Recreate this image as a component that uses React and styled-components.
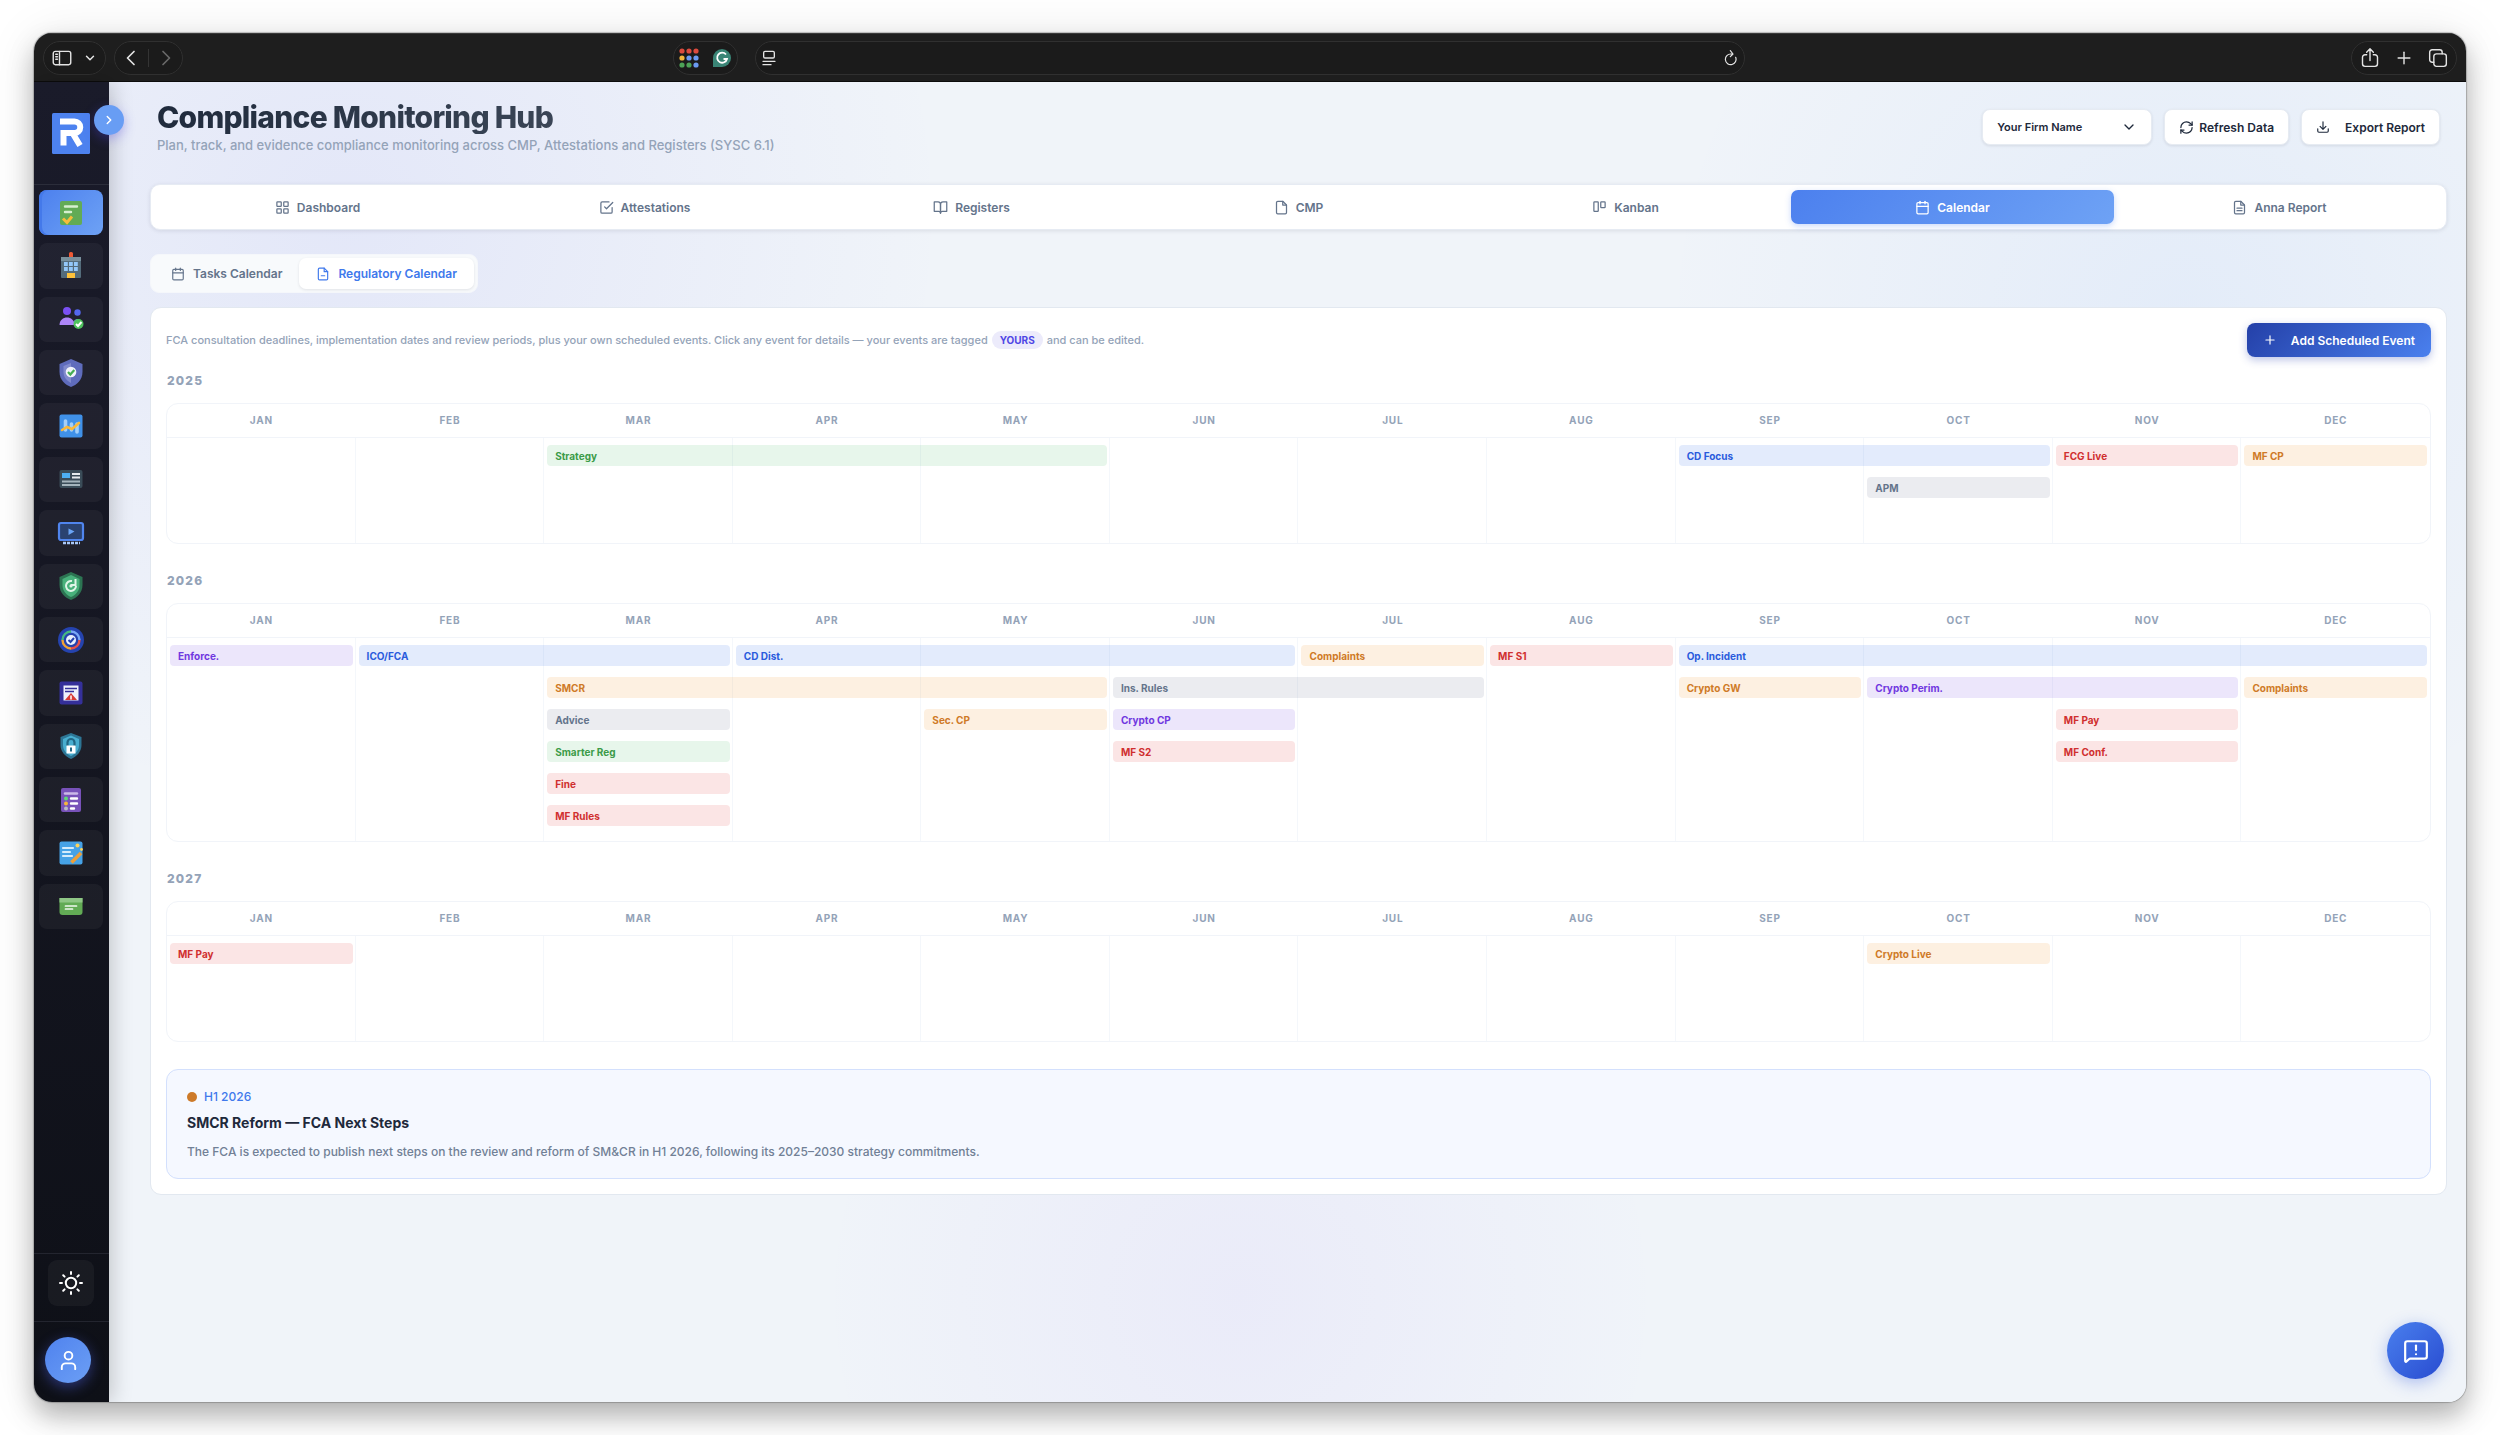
import React from "react";
import styled, { createGlobalStyle, css } from "styled-components";
import {
  Calendar,
  ChevronDown,
  ChevronRight,
  Plus,
  User,
  RefreshCw,
  MessageSquareWarning,
} from "lucide-react";

const GlobalStyle = createGlobalStyle`
  *, *::before, *::after { box-sizing: border-box; }
  body {
    margin: 0;
    background: #ffffff;
    font-family: Inter, "Liberation Sans", sans-serif;
    color: #1e293b;
  }
  button, select { font: inherit; color: inherit; }
  h1, h2, h3, p { margin: 0; }
`;

/* ---------- window frame ---------- */

const Page = styled.div`
  min-height: 100vh;
  padding: 33px 34px;
  display: flex;
`;

const Window = styled.div`
  flex: 1;
  display: flex;
  flex-direction: column;
  border-radius: 18px;
  overflow: hidden;
  background: #f0f4fa;
  box-shadow: 0 0 1px 1px rgba(0, 0, 0, 0.22), 0 14px 26px rgba(0, 0, 0, 0.26), 0 4px 50px rgba(0, 0, 0, 0.1);
`;

const BrowserBar = styled.header`
  display: grid;
  grid-template-columns: 1fr minmax(200px, 990px) 1fr;
  align-items: center;
  height: 49px;
  background: #1e1e1e;
  border-top: 1px solid #3a3a3a;
  border-bottom: 1px solid #0c0c0c;
  color: #e4e4e4;
`;

const BarSide = styled.div`
  display: flex;
  align-items: center;
  gap: 8px;
  padding: 0 9px;
  justify-content: ${(p) => (p.$end ? "flex-end" : "flex-start")};
`;

const Pill = styled.div`
  display: flex;
  align-items: center;
  justify-content: ${(p) => (p.$spread ? "space-between" : "center")};
  gap: ${(p) => p.$gap || 0}px;
  height: 34px;
  padding: 0 ${(p) => (p.$tight ? 5 : 8)}px;
  border: 1px solid #303030;
  border-radius: 17px;
  background: #1b1b1b;
`;

const PushPill = styled(Pill)`
  margin-left: auto;
  margin-right: 8px;
`;

const BarButton = styled.button`
  display: grid;
  place-items: center;
  padding: 0;
  border: 0;
  background: none;
  color: ${(p) => (p.$dim ? "#6a6a6a" : "#e4e4e4")};
`;

const PillRule = styled.span`
  width: 1px;
  height: 18px;
  background: #343434;
`;

const Body = styled.div`
  flex: 1;
  display: flex;
`;

/* ---------- sidebar ---------- */

const Sidebar = styled.aside`
  position: relative;
  z-index: 1;
  width: 75px;
  flex: none;
  display: flex;
  flex-direction: column;
  background: linear-gradient(180deg, #1a1b2a 0%, #0e1017 100%);
  box-shadow: 3px 0 20px rgba(0, 0, 0, 0.2);
`;

const LogoArea = styled.div`
  height: 103px;
  padding: 31px 0 0 18px;
  border-bottom: 1px solid #2b2d3a;
`;

const Toggle = styled.button`
  position: absolute;
  top: 23px;
  right: -15px;
  width: 30px;
  height: 30px;
  display: grid;
  place-items: center;
  padding: 0;
  border: 0;
  border-radius: 50%;
  background: #689df4;
  color: #fff;
  box-shadow: 0 4px 12px rgba(79, 70, 229, 0.35);
`;

const Nav = styled.nav`
  display: grid;
  grid-template-rows: repeat(14, 1fr);
  gap: 8px;
  height: 739px;
  margin: 5px 6px 0 5px;
`;

const NavItem = styled.button`
  display: grid;
  place-items: center;
  padding: 0;
  border: 0;
  border-radius: 8px;
  background: rgba(255, 255, 255, 0.045);
  ${(p) =>
    p.$active &&
    css`
      background: linear-gradient(135deg, #4c80ee, #6ea2f5);
      box-shadow: inset 3px 0 0 #4479ea;
    `}
`;

const SideFoot = styled.div`
  margin-top: auto;
`;

const ThemeRow = styled.div`
  height: 68px;
  padding: 6px 14px;
  border-top: 1px solid #23252f;
`;

const ThemeButton = styled.button`
  display: grid;
  place-items: center;
  width: 46px;
  height: 46px;
  padding: 0;
  border: 0;
  border-radius: 9px;
  background: rgba(255, 255, 255, 0.045);
  color: #fff;
`;

const UserRow = styled.div`
  height: 81px;
  padding: 15px 11px;
  border-top: 1px solid #23252f;
`;

const Avatar = styled.button`
  display: grid;
  place-items: center;
  width: 46px;
  height: 46px;
  padding: 0;
  border: 0;
  border-radius: 50%;
  background: linear-gradient(135deg, #4f82ee, #6c9ff5);
  color: #fff;
  box-shadow: 0 4px 14px rgba(79, 100, 240, 0.45);
`;

/* ---------- main ---------- */

const Main = styled.main`
  flex: 1;
  min-width: 0;
  padding: 18px 19px 0 41px;
  background:
    radial-gradient(circle at 10% 10%, rgba(99, 102, 241, 0.09), transparent 600px),
    radial-gradient(circle at 88% 18%, rgba(59, 130, 246, 0.07), transparent 520px),
    radial-gradient(circle at 48% 92%, rgba(139, 92, 246, 0.06), transparent 420px),
    #f0f4f9;
`;

const PageHead = styled.div`
  display: flex;
  align-items: center;
  justify-content: space-between;
  padding: 0 7px;
  margin-bottom: 30px;
`;

const Title = styled.h1`
  width: max-content;
  margin-bottom: 2px;
  font-size: 30px;
  line-height: 34px;
  font-weight: 800;
  letter-spacing: -0.025em;
  color: transparent;
  background: linear-gradient(135deg, #1e293b, #3b4657);
  background-clip: text;
`;

const Subtitle = styled.p`
  font-size: 13px;
  line-height: 18px;
  font-weight: 500;
  color: #94a3b8;
`;

const Actions = styled.div`
  display: flex;
  align-items: center;
  gap: 12px;
`;

const whiteControl = css`
  border: 1px solid #e6ebf2;
  border-radius: 8px;
  background: #fff;
  color: #1e293b;
  box-shadow: 0 1px 3px rgba(15, 23, 42, 0.1);
`;

const SelectWrap = styled.label`
  display: grid;
  grid-template-columns: 1fr 16px 15px;
  align-items: center;

  svg {
    grid-area: 1 / 2;
    pointer-events: none;
  }
`;

const FirmSelect = styled.select`
  ${whiteControl}
  grid-area: 1 / 1 / 2 / 4;
  width: 170px;
  height: 36px;
  padding: 0 14px;
  appearance: none;
  font-size: 11px;
  font-weight: 600;
`;

const ActionButton = styled.button`
  ${whiteControl}
  display: flex;
  align-items: center;
  gap: ${(p) => p.$gap}px;
  height: 36px;
  padding: 0 14px;
  font-size: 12px;
  font-weight: 600;
`;

const Tabs = styled.nav`
  display: flex;
  gap: 4px;
  padding: 5px;
  margin-bottom: 24px;
  border: 1px solid #e6ebf3;
  border-radius: 10px;
  background: #fff;
  box-shadow: 0 1px 4px rgba(15, 23, 42, 0.1);
`;

const Tab = styled.button`
  flex: 1 1 0;
  display: flex;
  align-items: center;
  justify-content: center;
  gap: 7px;
  height: 34px;
  padding: 0;
  border: 0;
  border-radius: 7px;
  font-size: 12px;
  font-weight: 600;
  color: #64748b;
  background: none;
  ${(p) =>
    p.$active &&
    css`
      color: #fff;
      background: linear-gradient(135deg, #4c80ee, #6ea2f5);
      box-shadow: 0 2px 6px rgba(79, 130, 240, 0.3);
    `}
`;

const SubTabs = styled.div`
  display: flex;
  width: max-content;
  padding: 3px;
  margin-bottom: 14px;
  border: 1px solid #f5f7fb;
  border-radius: 9px;
  background: #f8fafc;
`;

const SubTab = styled.button`
  display: flex;
  align-items: center;
  gap: 8px;
  height: 31px;
  padding: 0 17px;
  border: 0;
  border-radius: 7px;
  font-size: 12px;
  font-weight: 600;
  color: ${(p) => (p.$active ? "#4079ec" : "#64748b")};
  background: ${(p) => (p.$active ? "#ffffff" : "transparent")};
  box-shadow: ${(p) => (p.$active ? "0 1px 3px rgba(15, 23, 42, 0.1)" : "none")};
`;

const Card = styled.section`
  padding: 15px;
  border: 1px solid #e2e8f0;
  border-radius: 11px;
  background: #fff;
`;

const Intro = styled.div`
  display: flex;
  align-items: center;
  justify-content: space-between;
  margin-bottom: 14px;
`;

const IntroText = styled.p`
  font-size: 11px;
  line-height: 18px;
  font-weight: 500;
  color: #94a3b8;
`;

const Tag = styled.span`
  display: inline-block;
  margin: 0 4px;
  padding: 0 8px;
  border-radius: 9px;
  background: #ecebfb;
  color: #4f46e5;
  font-size: 10px;
  font-weight: 700;
`;

const AddButton = styled.button`
  display: flex;
  align-items: center;
  gap: 14px;
  height: 34px;
  padding: 0 16px;
  border: 0;
  border-radius: 8px;
  background: linear-gradient(135deg, #2440a8, #4a80ee);
  color: #fff;
  font-size: 12px;
  font-weight: 600;
  box-shadow: 0 3px 8px rgba(37, 64, 175, 0.3);
`;

/* ---------- timeline ---------- */

const Year = styled.section`
  margin-bottom: 27px;
`;

const YearLabel = styled.h2`
  margin: 0 1px 12px;
  font-size: 12px;
  line-height: 20px;
  font-weight: 800;
  letter-spacing: 0.1em;
  color: #94a3b8;
`;

const Timeline = styled.div`
  border: 1px solid #f1f4f9;
  border-radius: 12px;
  overflow: hidden;
`;

const Months = styled.div`
  display: grid;
  grid-template-columns: repeat(12, 1fr);
  border-bottom: 1px solid #f1f4f9;
`;

const Month = styled.div`
  font-size: 10px;
  line-height: 33px;
  font-weight: 700;
  letter-spacing: 0.08em;
  text-align: center;
  color: #94a3b8;
`;

const Board = styled.div`
  display: grid;
  min-height: 105px;
`;

const Columns = styled.div`
  grid-area: 1 / 1;
  display: grid;
  grid-template-columns: repeat(12, 1fr);
`;

const Column = styled.div`
  border-right: 1px solid #f4f7fb;

  &:last-child {
    border-right: 0;
  }
`;

const Lanes = styled.div`
  grid-area: 1 / 1;
  display: grid;
  grid-template-columns: repeat(12, 1fr);
  grid-auto-rows: 21px;
  row-gap: 11px;
  padding: 7px 0 15px;
`;

const tones = {
  green: ["rgba(34, 170, 70, 0.11)", "#3c9b48"],
  blue: ["rgba(37, 99, 235, 0.13)", "#2a5bdc"],
  red: ["rgba(220, 38, 38, 0.12)", "#d02f2f"],
  amber: ["rgba(240, 140, 20, 0.13)", "#cf7a27"],
  gray: ["rgba(90, 100, 130, 0.12)", "#64748b"],
  purple: ["rgba(109, 61, 225, 0.13)", "#7038e0"],
};

const Event = styled.button`
  grid-column: ${(p) => p.$start} / span ${(p) => p.$span};
  grid-row: ${(p) => p.$lane};
  margin: 0 3px;
  padding: 0 8px;
  border: 0;
  border-radius: 4px;
  text-align: left;
  font-size: 10px;
  font-weight: 700;
  background: ${(p) => tones[p.$tone][0]};
  color: ${(p) => tones[p.$tone][1]};
`;

/* ---------- note ---------- */

const Note = styled.article`
  padding: 18px 20px 16px;
  border: 1px solid #d3e0fd;
  border-radius: 12px;
  background: #f5f8ff;
`;

const NoteDate = styled.p`
  display: flex;
  align-items: center;
  gap: 7px;
  font-size: 12px;
  line-height: 18px;
  font-weight: 500;
  color: #4079ec;

  &::before {
    content: "";
    width: 10px;
    height: 10px;
    border-radius: 50%;
    background: #cd7a29;
  }
`;

const NoteTitle = styled.h3`
  margin: 6px 0 8px;
  font-size: 14px;
  line-height: 22px;
  font-weight: 700;
  color: #1e293b;
`;

const NoteText = styled.p`
  font-size: 12px;
  line-height: 20px;
  font-weight: 500;
  color: #718096;
`;

const ChatButton = styled.button`
  position: fixed;
  right: 56px;
  bottom: 56px;
  display: grid;
  place-items: center;
  width: 57px;
  height: 57px;
  padding: 0;
  border: 0;
  border-radius: 50%;
  background: linear-gradient(135deg, #4a80ee, #284bd0);
  color: #fff;
  box-shadow: 0 4px 16px rgba(50, 90, 220, 0.35);
`;

/* ---------- drawings ---------- */

const Stroke = ({ size = 15, width = 2, children }) => (
  <svg width={size} height={size} viewBox="0 0 24 24" fill="none" stroke="currentColor"
    strokeWidth={width} strokeLinecap="round" strokeLinejoin="round" aria-hidden="true">
    {children}
  </svg>
);

const tabIcons = {
  Dashboard: (
    <Stroke>
      <rect x="3" y="3" width="7" height="7" rx="1" />
      <rect x="14" y="3" width="7" height="7" rx="1" />
      <rect x="14" y="14" width="7" height="7" rx="1" />
      <rect x="3" y="14" width="7" height="7" rx="1" />
    </Stroke>
  ),
  Attestations: (
    <Stroke>
      <path d="M9 11l3 3L22 4" />
      <path d="M21 12v7a2 2 0 0 1-2 2H5a2 2 0 0 1-2-2V5a2 2 0 0 1 2-2h11" />
    </Stroke>
  ),
  Registers: (
    <Stroke>
      <path d="M2 3h6a4 4 0 0 1 4 4v14a3 3 0 0 0-3-3H2z" />
      <path d="M22 3h-6a4 4 0 0 0-4 4v14a3 3 0 0 1 3-3h7z" />
    </Stroke>
  ),
  CMP: (
    <Stroke>
      <path d="M14 2H6a2 2 0 0 0-2 2v16a2 2 0 0 0 2 2h12a2 2 0 0 0 2-2V8z" />
      <path d="M14 2v6h6" />
    </Stroke>
  ),
  Kanban: (
    <Stroke>
      <rect x="3" y="3" width="7" height="15" rx="1" />
      <rect x="14" y="3" width="7" height="9" rx="1" />
    </Stroke>
  ),
  Calendar: <Calendar size={15} aria-hidden="true" />,
  "Anna Report": (
    <Stroke>
      <path d="M14 2H6a2 2 0 0 0-2 2v16a2 2 0 0 0 2 2h12a2 2 0 0 0 2-2V8z" />
      <path d="M14 2v6h6M8 13h8M8 17h8" />
    </Stroke>
  ),
};

const Art = ({ children }) => (
  <svg width="28" height="28" viewBox="0 0 28 28" fill="none" aria-hidden="true">
    {children}
  </svg>
);

const navArt = [
  ["Compliance monitoring", (
    <Art>
      <rect x="3" y="2" width="22" height="24" rx="2" fill="#62ab55" />
      <path d="M8 7.500h12M8 13h6" stroke="#d6efcf" strokeWidth="2.400" strokeLinecap="round" />
      <path d="M6 19.500l4 4 5-6" stroke="#f6bd3a" strokeWidth="3" />
    </Art>
  )],
  ["Firm", (
    <Art>
      <rect x="12" y="0" width="4" height="6" rx="1.500" fill="#ee5a35" />
      <rect x="4" y="5" width="20" height="21" rx="1" fill="#546c7b" />
      <rect x="4" y="5" width="20" height="4" fill="#78909c" />
      <path d="M7 12h4M12 12h4M17 12h4M7 17h4M12 17h4M17 17h4" stroke="#93c8f9" strokeWidth="4" strokeDasharray="3.800 10" />
      <rect x="10" y="21" width="8" height="5" fill="#fdc23c" />
    </Art>
  )],
  ["People", (
    <Art>
      <circle cx="10" cy="6" r="4" fill="#7a50f3" />
      <circle cx="20.500" cy="7.500" r="3.200" fill="#5468ee" />
      <path d="M16 20c0-8 9-8 9 0z" fill="#6f86f5" />
      <path d="M2.500 20c0-10 15-10 15 0z" fill="#ae86f8" />
      <circle cx="21.500" cy="19" r="5" fill="#4fc15d" />
      <path d="M19 19l2 2 3.500-4" stroke="#fff" strokeWidth="2" />
    </Art>
  )],
  ["Protection", (
    <Art>
      <path d="M14 0l11.500 5v8c0 8-6 13-11.500 15C8.500 26 2.500 21 2.500 13V5z" fill="#5f6cbc" />
      <path d="M14 4L6.500 7v6c0 6 4 9 7.500 11z" fill="#818bcd" />
      <circle cx="14" cy="13" r="5.300" fill="#f0f3fb" />
      <path d="M11 13l2.300 2.500 4-4.500" stroke="#45ae52" strokeWidth="2.200" />
    </Art>
  )],
  ["Analytics", (
    <Art>
      <rect x="2.500" y="2.500" width="23" height="23" rx="2" fill="#4091e8" />
      <path d="M8.500 9v9M14.500 12v6M20 12v8" stroke="#a4cff8" strokeWidth="3.600" strokeLinecap="round" />
      <path d="M5 18l5-3 5 2 7-6" stroke="#f9b93a" strokeWidth="2.600" strokeLinecap="round" />
    </Art>
  )],
  ["News", (
    <Art>
      <rect x="2.500" y="5" width="23" height="18" rx="2" fill="#3a4c58" />
      <rect x="5" y="8" width="8" height="5" fill="#4db0f3" />
      <path d="M15 9h8M15 12.500h8" stroke="#e6ecef" strokeWidth="2" />
      <path d="M5 16.500h18M5 20h18" stroke="#a5b4bc" strokeWidth="2" />
    </Art>
  )],
  ["Training", (
    <Art>
      <rect x="2" y="4" width="24" height="17" rx="2" fill="#2a4270" stroke="#5085ee" strokeWidth="2.200" />
      <path d="M11.500 9.500l6 3-6 3.500z" fill="#6aa4f6" />
      <path d="M6 24h17" stroke="#a9c8f8" strokeWidth="2.400" strokeDasharray="3 1" />
    </Art>
  )],
  ["Reviews", (
    <Art>
      <path d="M14 0l11.500 5v8c0 8-6 13-11.500 15C8.500 26 2.500 21 2.500 13V5z" fill="#2c7452" />
      <path d="M14 3l8.500 4v6c0 6-4 10-8.500 12-4.500-2-8.500-6-8.500-12V7z" fill="#48b17b" />
      <path d="M15 9a5 5 0 1 0 4 5M18.500 7v6h-5" stroke="#dff5e8" strokeWidth="2" />
      <circle cx="14" cy="14" r="1.600" fill="#dff5e8" />
    </Art>
  )],
  ["Targets", (
    <Art>
      <circle cx="14" cy="14" r="13" fill="#2543ae" />
      <path d="M5.500 14A8.500 8.500 0 0 1 14 5.500" stroke="#47b880" strokeWidth="2.400" />
      <path d="M14 5.500a8.500 8.500 0 0 1 8.500 8.500" stroke="#79a8f6" strokeWidth="2.400" />
      <path d="M22.500 14a8.500 8.500 0 0 1-8.500 8.500" stroke="#e5504a" strokeWidth="2.400" />
      <path d="M14 22.500A8.500 8.500 0 0 1 5.500 14" stroke="#f0a235" strokeWidth="2.400" />
      <circle cx="14" cy="14" r="5" fill="#e9f0fd" />
      <path d="M11.500 14l2 2 3.500-4" stroke="#2543ae" strokeWidth="2" />
    </Art>
  )],
  ["Breaches", (
    <Art>
      <rect x="2.500" y="2.500" width="23" height="23" rx="2" fill="#35309a" />
      <rect x="6.500" y="6.500" width="15" height="15" fill="#eef0fb" />
      <path d="M8 9.500h12M8 12.500h9" stroke="#35309a" strokeWidth="1.600" />
      <path d="M14 14l6 7H8z" fill="#d83a34" />
      <path d="M14 16.500v4" stroke="#fff" strokeWidth="1.500" />
    </Art>
  )],
  ["Data security", (
    <Art>
      <path d="M14 1l10.500 4v8c0 7-5 11.500-10.500 14C8.500 24.500 3.500 20 3.500 13V5z" fill="#2d7594" />
      <path d="M14 3.500l8 3.500v6c0 6-4 9-8 11-4-2-8-5-8-11V7z" fill="#49aed0" />
      <path d="M10.500 14v-3.500a3.500 3.500 0 0 1 7 0V14" stroke="#226784" strokeWidth="2.200" />
      <rect x="9.500" y="13.500" width="9" height="8" fill="#fff" />
      <path d="M14 15.500v4" stroke="#226784" strokeWidth="2" />
    </Art>
  )],
  ["Checklists", (
    <Art>
      <rect x="4" y="2" width="20" height="24" rx="2" fill="#7852b9" />
      <path d="M8 7.500h12" stroke="#cbb9e8" strokeWidth="2.400" strokeLinecap="round" />
      <path d="M14 12.500h6M14 17.500h6M14 22.500h3" stroke="#fff" strokeWidth="2.400" strokeLinecap="round" />
      <circle cx="9" cy="12.500" r="2" fill="#5fdb77" />
      <circle cx="9" cy="17.500" r="2" fill="#f6b63a" />
      <circle cx="9" cy="22.500" r="2" fill="#b9bcc6" />
    </Art>
  )],
  ["Drafting", (
    <Art>
      <rect x="2.500" y="2.500" width="23" height="23" rx="2" fill="#46a2e6" />
      <path d="M6 9h10M6 13h7M6 17h9" stroke="#d5ecfb" strokeWidth="2.200" strokeLinecap="round" />
      <path d="M14.500 23.500l9.500-9.500" stroke="#ee9f38" strokeWidth="3.600" />
      <circle cx="20.500" cy="6.500" r="2" fill="#fcd35a" />
      <circle cx="24.500" cy="10.500" r="1.400" fill="#fcd35a" />
    </Art>
  )],
  ["Archive", (
    <Art>
      <path d="M2.500 6h23v14a3 3 0 0 1-3 3h-17a3 3 0 0 1-3-3z" fill="#62ab55" />
      <path d="M2.500 6h23v4.500h-23z" fill="#8fc786" />
      <path d="M8.500 14h11M8.500 17h7" stroke="#f1f9ef" strokeWidth="1.700" strokeLinecap="round" />
    </Art>
  )],
];

const Logo = () => (
  <svg width="38" height="41" viewBox="0 0 38 41" role="img" aria-label="Brand logo">
    <rect width="38" height="41" rx="1.500" fill="#4d82ef" />
    <path d="M8 8.500h14.500a5.700 5.700 0 0 1 0 11.500H11.500v12.500M20.500 20l7.500 12.500" fill="none" stroke="#fff" strokeWidth="6" />
  </svg>
);

const Chevron = ({ flip }) => (
  <svg width="16" height="16" viewBox="0 0 16 16" fill="none" stroke="currentColor"
    strokeWidth="1.700" strokeLinecap="round" strokeLinejoin="round" aria-hidden="true">
    <path d={flip ? "M5 1.500L11.500 8 5 14.500" : "M11 1.500L4.500 8l6.500 6.500"} />
  </svg>
);

const dotColors = ["#dc4b3e", "#dc4b3e", "#dc4b3e", "#f2b63c", "#6b9bf2", "#6b9bf2", "#4da257", "#4da257", "#6b9bf2"];

const AppDots = () => (
  <svg width="20" height="20" viewBox="0 0 20 20" aria-hidden="true">
    {dotColors.map((c, i) => (
      <circle key={i} cx={3 + (i % 3) * 7} cy={3 + Math.floor(i / 3) * 7} r="2.600" fill={c} />
    ))}
  </svg>
);

const WritingBadge = () => (
  <svg width="20" height="20" viewBox="0 0 20 20" fill="none" aria-hidden="true">
    <path d="M10 1a9 9 0 1 1 0 18H1v-9a9 9 0 0 1 9-9z" fill="#3a8576" />
    <path d="M14 6.500a5 5 0 1 0 1 4.500h-3.500" stroke="#fff" strokeWidth="1.800" />
  </svg>
);

/* ---------- data ---------- */

const months = ["JAN", "FEB", "MAR", "APR", "MAY", "JUN", "JUL", "AUG", "SEP", "OCT", "NOV", "DEC"];

// label, first month, months covered, lane, tone
const years = [
  ["2025", [
    ["Strategy", 3, 3, 1, "green"],
    ["CD Focus", 9, 2, 1, "blue"],
    ["FCG Live", 11, 1, 1, "red"],
    ["MF CP", 12, 1, 1, "amber"],
    ["APM", 10, 1, 2, "gray"],
  ]],
  ["2026", [
    ["Enforce.", 1, 1, 1, "purple"],
    ["ICO/FCA", 2, 2, 1, "blue"],
    ["CD Dist.", 4, 3, 1, "blue"],
    ["Complaints", 7, 1, 1, "amber"],
    ["MF S1", 8, 1, 1, "red"],
    ["Op. Incident", 9, 4, 1, "blue"],
    ["SMCR", 3, 3, 2, "amber"],
    ["Ins. Rules", 6, 2, 2, "gray"],
    ["Crypto GW", 9, 1, 2, "amber"],
    ["Crypto Perim.", 10, 2, 2, "purple"],
    ["Complaints", 12, 1, 2, "amber"],
    ["Advice", 3, 1, 3, "gray"],
    ["Sec. CP", 5, 1, 3, "amber"],
    ["Crypto CP", 6, 1, 3, "purple"],
    ["MF Pay", 11, 1, 3, "red"],
    ["Smarter Reg", 3, 1, 4, "green"],
    ["MF S2", 6, 1, 4, "red"],
    ["MF Conf.", 11, 1, 4, "red"],
    ["Fine", 3, 1, 5, "red"],
    ["MF Rules", 3, 1, 6, "red"],
  ]],
  ["2027", [
    ["MF Pay", 1, 1, 1, "red"],
    ["Crypto Live", 10, 1, 1, "amber"],
  ]],
];

function Browser() {
  return (
    <BrowserBar>
      <BarSide>
        <Pill $gap={11}>
          <BarButton aria-label="Show sidebar">
            <Stroke size={20} width={1.7}>
              <rect x="1.500" y="4" width="21" height="16" rx="2.500" />
              <path d="M9 4v16M4.500 7.500h2M4.500 10.500h2M4.500 13.500h2" />
            </Stroke>
          </BarButton>
          <BarButton aria-label="Tab groups"><ChevronDown size={14} strokeWidth={2.5} /></BarButton>
        </Pill>
        <Pill $gap={9}>
          <BarButton aria-label="Back"><Chevron /></BarButton>
          <PillRule />
          <BarButton aria-label="Forward" $dim><Chevron flip /></BarButton>
        </Pill>
        <PushPill $gap={13} $tight>
          <BarButton aria-label="Apps"><AppDots /></BarButton>
          <BarButton aria-label="Writing assistant"><WritingBadge /></BarButton>
        </PushPill>
      </BarSide>
      <Pill $spread $tight>
        <BarButton aria-label="Reader">
          <Stroke size={16} width={2}>
            <rect x="4" y="2" width="16" height="10" rx="2" />
            <path d="M3 17h18M3 22h12" />
          </Stroke>
        </BarButton>
        <BarButton aria-label="Reload">
          <Stroke size={16} width={1.8}>
            <path d="M19 11a8 8 0 1 1-7-5h2M11 1l4 5-4 4" />
          </Stroke>
        </BarButton>
      </Pill>
      <BarSide $end>
        <Pill $gap={14}>
          <BarButton aria-label="Share">
            <Stroke size={20} width={1.7}>
              <path d="M8 8H6a3 3 0 0 0-3 3v8a3 3 0 0 0 3 3h12a3 3 0 0 0 3-3v-8a3 3 0 0 0-3-3h-2M12 15V1.500M8 5l4-4 4 4" />
            </Stroke>
          </BarButton>
          <BarButton aria-label="New tab"><Plus size={20} strokeWidth={1.7} /></BarButton>
          <BarButton aria-label="All tabs">
            <Stroke size={20} width={1.7}>
              <rect x="7" y="7" width="15" height="15" rx="3" />
              <path d="M7 17H5a3 3 0 0 1-3-3V5a3 3 0 0 1 3-3h9a3 3 0 0 1 3 3v2" />
            </Stroke>
          </BarButton>
        </Pill>
      </BarSide>
    </BrowserBar>
  );
}

function SideMenu() {
  return (
    <Sidebar>
      <LogoArea><Logo /></LogoArea>
      <Toggle aria-label="Expand menu"><ChevronRight size={14} strokeWidth={2.5} /></Toggle>
      <Nav aria-label="Modules">
        {navArt.map(([name, art], i) => (
          <NavItem key={name} aria-label={name} $active={i === 0}>{art}</NavItem>
        ))}
      </Nav>
      <SideFoot>
        <ThemeRow>
          <ThemeButton aria-label="Switch theme">
            <Stroke size={24} width={2}>
              <circle cx="12" cy="12" r="5.200" />
              <path d="M12 1v2M12 21v2M4.200 4.200l1.400 1.400M18.400 18.400l1.400 1.400M1 12h2M21 12h2M4.200 19.800l1.400-1.400M18.400 5.600l1.400-1.400" />
            </Stroke>
          </ThemeButton>
        </ThemeRow>
        <UserRow>
          <Avatar aria-label="Account"><User size={23} /></Avatar>
        </UserRow>
      </SideFoot>
    </Sidebar>
  );
}

export default function App() {
  return (
    <>
      <GlobalStyle />
      <Page>
        <Window>
          <Browser />
          <Body>
            <SideMenu />
            <Main>
              <PageHead>
                <div>
                  <Title>Compliance Monitoring Hub</Title>
                  <Subtitle>Plan, track, and evidence compliance monitoring across CMP, Attestations and Registers (SYSC 6.1)</Subtitle>
                </div>
                <Actions>
                  <SelectWrap>
                    <FirmSelect aria-label="Firm">
                      <option>Your Firm Name</option>
                    </FirmSelect>
                    <ChevronDown size={16} aria-hidden="true" />
                  </SelectWrap>
                  <ActionButton $gap={5}><RefreshCw size={15} aria-hidden="true" />Refresh Data</ActionButton>
                  <ActionButton $gap={15}>
                    <Stroke size={14}>
                      <path d="M3 15v4a2 2 0 0 0 2 2h14a2 2 0 0 0 2-2v-4M7 11l5 5 5-5M12 16V3" />
                    </Stroke>
                    Export Report
                  </ActionButton>
                </Actions>
              </PageHead>

              <Tabs aria-label="Sections">
                {Object.entries(tabIcons).map(([name, icon]) => (
                  <Tab key={name} $active={name === "Calendar"}>{icon}{name}</Tab>
                ))}
              </Tabs>

              <SubTabs>
                <SubTab><Calendar size={14} aria-hidden="true" />Tasks Calendar</SubTab>
                <SubTab $active>
                  <Stroke size={14}>
                    <path d="M14 2H6a2 2 0 0 0-2 2v16a2 2 0 0 0 2 2h12a2 2 0 0 0 2-2V8z" />
                    <path d="M14 2v6h6M9 15h6" />
                  </Stroke>
                  Regulatory Calendar
                </SubTab>
              </SubTabs>

              <Card>
                <Intro>
                  <IntroText>
                    FCA consultation deadlines, implementation dates and review periods, plus your own scheduled events. Click any event for details — your events are tagged
                    <Tag>YOURS</Tag>
                    and can be edited.
                  </IntroText>
                  <AddButton><Plus size={14} aria-hidden="true" />Add Scheduled Event</AddButton>
                </Intro>

                {years.map(([year, events]) => (
                  <Year key={year}>
                    <YearLabel>{year}</YearLabel>
                    <Timeline>
                      <Months>{months.map((m) => <Month key={m}>{m}</Month>)}</Months>
                      <Board>
                        <Columns>{months.map((m) => <Column key={m} />)}</Columns>
                        <Lanes>
                          {events.map(([label, start, span, lane, tone]) => (
                            <Event key={`${lane}-${start}`} $start={start} $span={span} $lane={lane} $tone={tone}>
                              {label}
                            </Event>
                          ))}
                        </Lanes>
                      </Board>
                    </Timeline>
                  </Year>
                ))}

                <Note>
                  <NoteDate>H1 2026</NoteDate>
                  <NoteTitle>SMCR Reform — FCA Next Steps</NoteTitle>
                  <NoteText>
                    The FCA is expected to publish next steps on the review and reform of SM&amp;CR in H1 2026, following its 2025–2030 strategy commitments.
                  </NoteText>
                </Note>
              </Card>
            </Main>
          </Body>
          <ChatButton aria-label="Send feedback"><MessageSquareWarning size={26} /></ChatButton>
        </Window>
      </Page>
    </>
  );
}
